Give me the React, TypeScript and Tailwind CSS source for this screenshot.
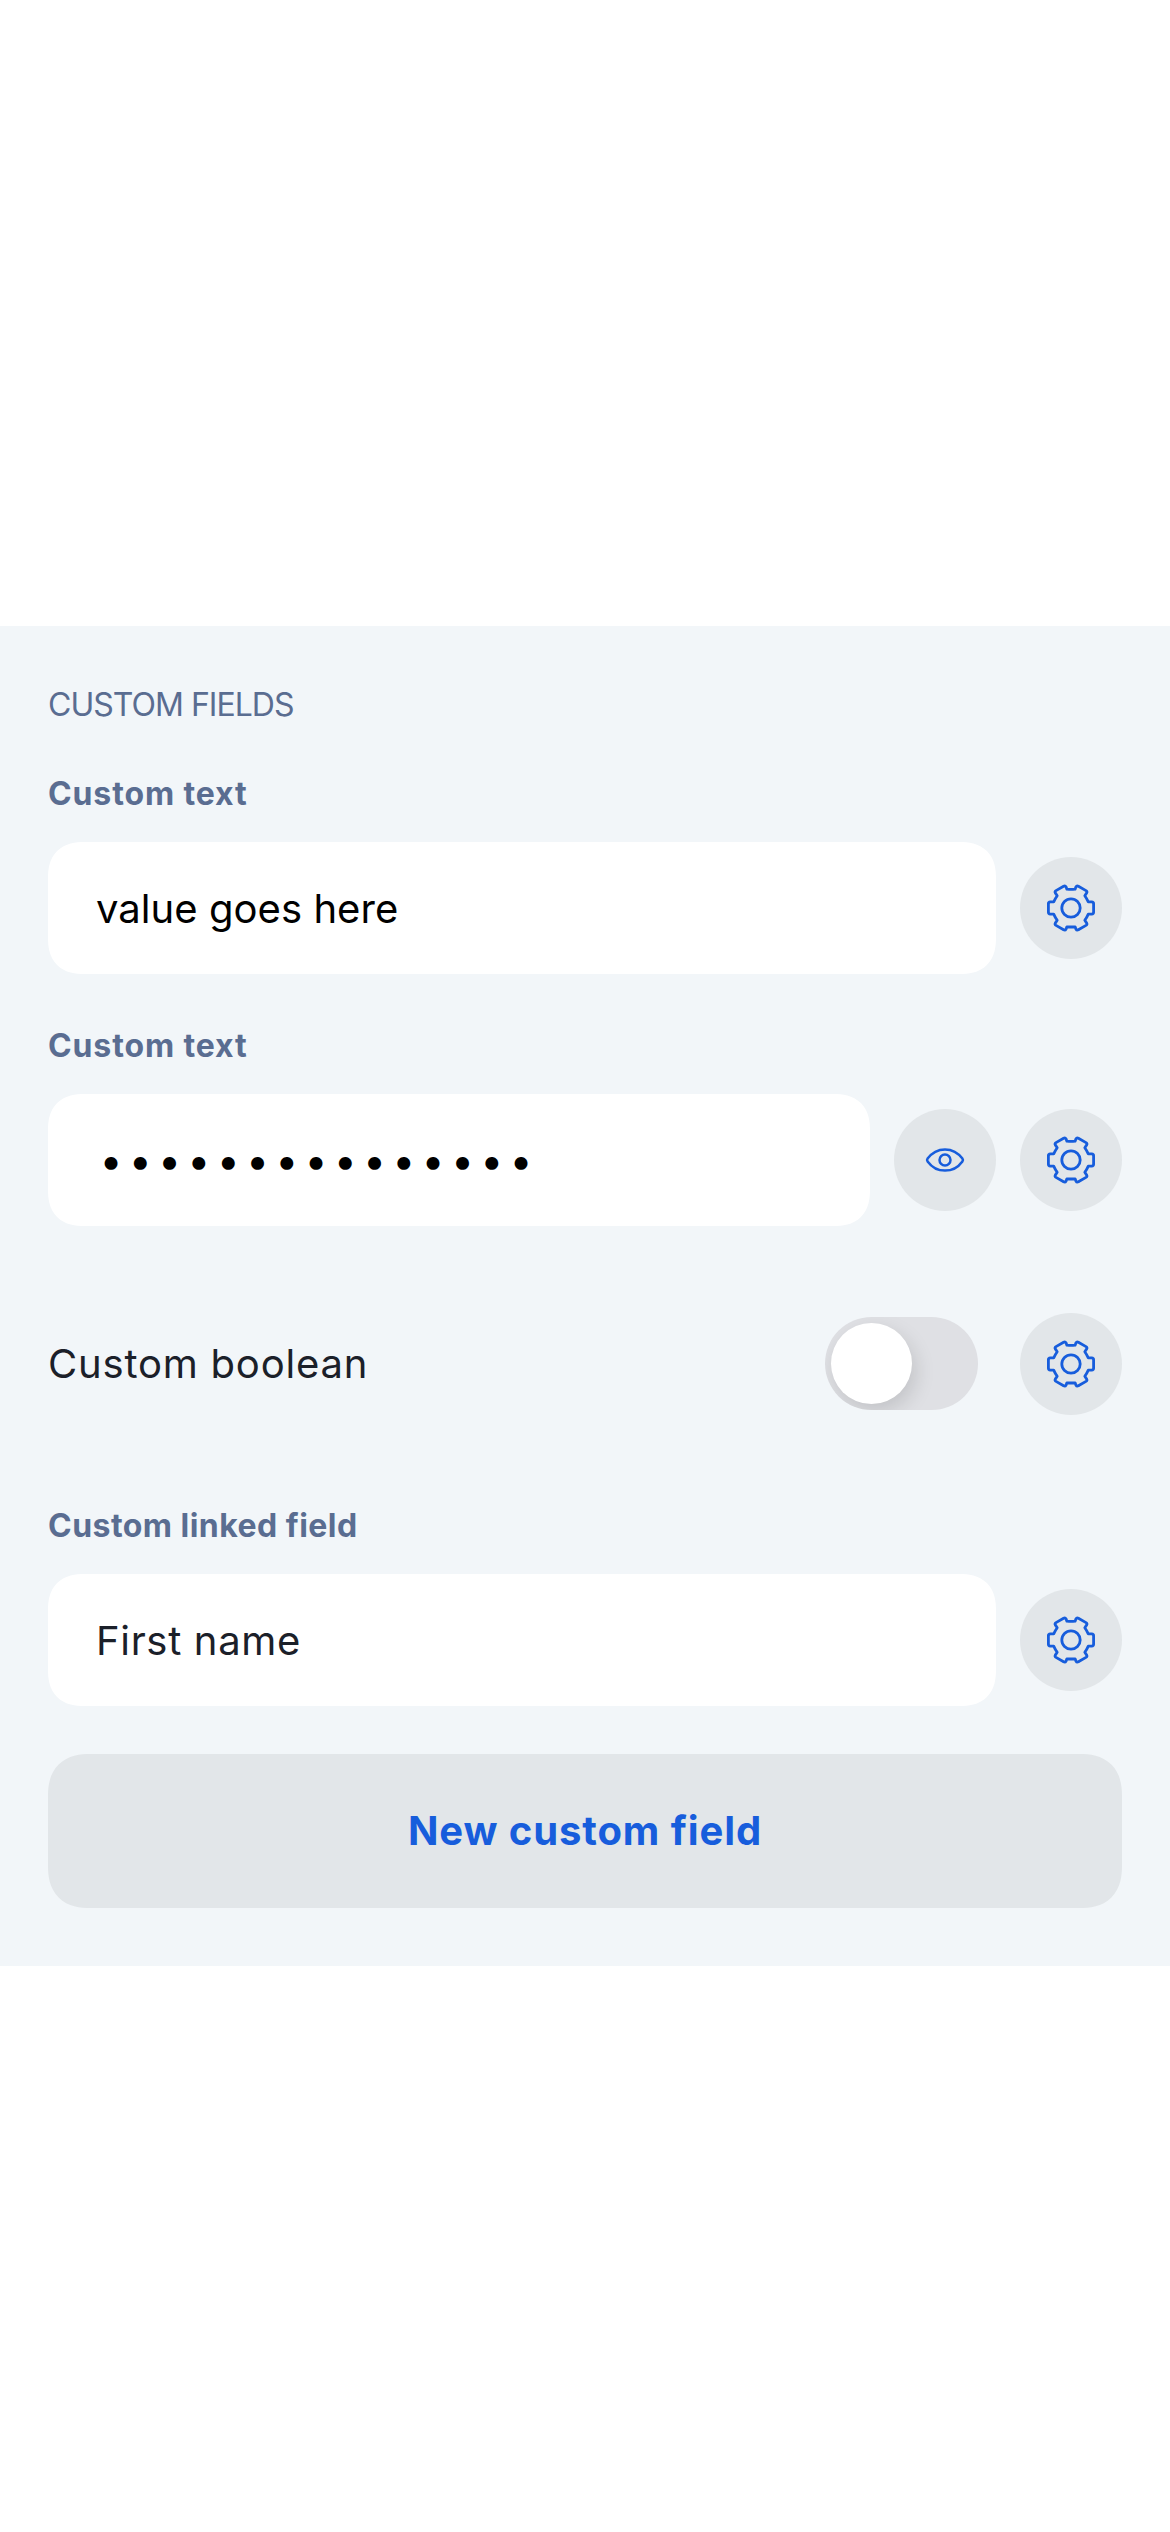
import React from "react";

const corners = "[corner-shape:superellipse(1.25)]";

function GearIcon() {
  return (
    <svg className="size-[50px]" viewBox="0 0 50 50" fill="none" stroke="currentColor" strokeWidth="2.8" strokeLinejoin="round" strokeLinecap="round">
      <path d="M20.9 6.2 L20.1 4 Q19.2 2.4 17.6 3.2 L10 7.600 Q8.600 8.500 9.300 9.900 L11.200 12.700 Q9.200 15.500 7.700 18.900 L4.300 18.900 Q2.400 19 2.400 20.700 L2.400 29.300 Q2.400 31 4.300 31.100 L7.700 31.100 Q9.200 34.500 11.200 37.300 L9.300 40.100 Q8.600 41.500 10 42.400 L17.600 46.800 Q19.200 47.600 20.100 46 L20.900 43.800 Q25 44.200 29.100 43.800 L29.900 46 Q30.800 47.600 32.400 46.800 L40 42.400 Q41.400 41.500 40.700 40.100 L38.800 37.300 Q40.800 34.500 42.300 31.100 L45.700 31.100 Q47.600 31 47.600 29.300 L47.600 20.700 Q47.600 19 45.700 18.900 L42.300 18.900 Q40.800 15.500 38.800 12.700 L40.700 9.900 Q41.400 8.500 40 7.600 L32.400 3.200 Q30.800 2.400 29.900 4 L29.100 6.200 Q25 6.600 20.900 6.200 Z" />
      <circle cx="25" cy="25" r="9.2" />
    </svg>
  );
}

function EyeIcon() {
  return (
    <svg className="h-[26px] w-10" viewBox="0 0 40 26" fill="none" stroke="currentColor" strokeWidth="2.5" strokeLinejoin="round">
      <path d="M2.6 11.6 C7 5.600 13.200 2.400 20 2.400 C26.800 2.400 33 5.600 37.400 11.600 Q38.400 13 37.400 14.400 C33 20.400 26.800 23.600 20 23.600 C13.200 23.600 7 20.400 2.600 14.400 Q1.600 13 2.600 11.600 Z" />
      <circle cx="20" cy="13" r="5.5" />
    </svg>
  );
}

function RoundButton({ label, children }: { label: string; children: React.ReactNode }) {
  return (
    <button aria-label={label} className="flex size-[102px] shrink-0 items-center justify-center rounded-full bg-[#e2e6e9] text-[#175ddc]">
      {children}
    </button>
  );
}

function Label({ className = "", children }: { className?: string; children: React.ReactNode }) {
  return <div className={`h-10 text-[32px] leading-10 font-bold whitespace-nowrap text-[#5a6d91] ${className}`}>{children}</div>;
}

function Row({ value, className = "", children }: { value: string; className?: string; children: React.ReactNode }) {
  return (
    <div className="mt-7 flex items-center gap-6">
      <div className={`flex h-[132px] flex-1 items-center rounded-[36px] bg-white pl-12 whitespace-nowrap ${corners} ${className}`}>{value}</div>
      {children}
    </div>
  );
}

export default function App() {
  return (
    <div className="min-h-[2532px] bg-white pt-[626px] font-['Inter',sans-serif]">
      <main className="flex h-[1340px] flex-col bg-[#f2f6f9] px-12 pt-[59px]">
        <h2 className="h-10 text-[32px] leading-10 tracking-[-0.98px] text-[#5a6d91]">CUSTOM FIELDS</h2>

        <Label className="mt-[49px] tracking-[0.88px]">Custom text</Label>
        <Row value="value goes here" className="pt-px text-[40px] tracking-[0.05px] text-black">
          <RoundButton label="Edit field"><GearIcon /></RoundButton>
        </Row>

        <Label className="mt-[52px] tracking-[0.88px]">Custom text</Label>
        <Row value="•••••••••••••••" className="pt-px text-[41px] tracking-[6.22px] text-black indent-[3.5px]">
          <RoundButton label="Show value"><EyeIcon /></RoundButton>
          <RoundButton label="Edit field"><GearIcon /></RoundButton>
        </Row>

        <div className="mt-[87px] flex items-center">
          <span className="flex-1 text-[40px] leading-[50px] tracking-[0.8px] text-[#1b2029]">Custom boolean</span>
          <button role="switch" aria-checked="false" aria-label="Custom boolean" className="mr-[42px] mb-px flex h-[93px] w-[153px] items-center overflow-hidden rounded-full bg-[#dfe0e4] p-1.5">
            <span className="size-[81px] rounded-full bg-white shadow-[4px_8px_20px_rgba(0,0,0,0.13)]" />
          </button>
          <RoundButton label="Edit field"><GearIcon /></RoundButton>
        </div>

        <Label className="mt-[91px] tracking-[0.46px]">Custom linked field</Label>
        <Row value="First name" className="pt-px text-[40px] tracking-[0.67px] text-[#1b2029]">
          <RoundButton label="Edit field"><GearIcon /></RoundButton>
        </Row>

        <button className={`mt-12 h-[154px] w-full shrink-0 rounded-[42px] bg-[#e2e6e9] text-[40px] font-bold tracking-[0.9px] text-[#175ddc] ${corners}`}>
          New custom field
        </button>
      </main>
    </div>
  );
}
